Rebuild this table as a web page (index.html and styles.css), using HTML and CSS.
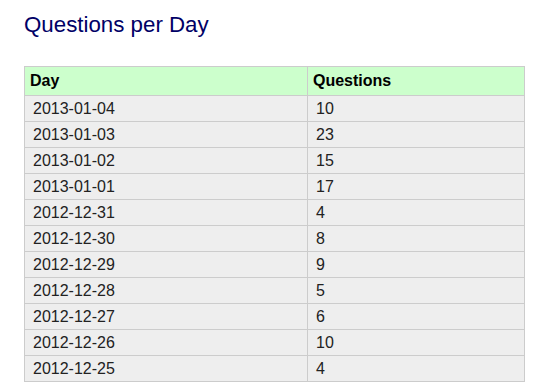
FILE: index.html
```html
<!DOCTYPE html>
<html>
<head>
<meta charset="utf-8">
<title>Questions per Day</title>
<link rel="stylesheet" href="styles.css">
</head>
<body>
<div class="page">
  <h1 class="title">Questions per Day</h1>
  <table class="stats">
    <colgroup><col class="col-day"><col class="col-q"></colgroup>
    <thead>
      <tr><th>Day</th><th>Questions</th></tr>
    </thead>
    <tbody>
      <tr><td>2013-01-04</td><td>10</td></tr>
      <tr><td>2013-01-03</td><td>23</td></tr>
      <tr><td>2013-01-02</td><td>15</td></tr>
      <tr><td>2013-01-01</td><td>17</td></tr>
      <tr><td>2012-12-31</td><td>4</td></tr>
      <tr><td>2012-12-30</td><td>8</td></tr>
      <tr><td>2012-12-29</td><td>9</td></tr>
      <tr><td>2012-12-28</td><td>5</td></tr>
      <tr><td>2012-12-27</td><td>6</td></tr>
      <tr><td>2012-12-26</td><td>10</td></tr>
      <tr><td>2012-12-25</td><td>4</td></tr>
    </tbody>
  </table>
</div>
</body>
</html>
```
FILE: styles.css
```css
html, body {
  margin: 0;
  padding: 0;
  background: #ffffff;
}
body {
  font-family: "Liberation Sans", Arial, sans-serif;
  color: #222222;
}
.page {
  padding: 12px 15px 0 24px;
}
.title {
  margin: 0 0 29px;
  font-size: 22.3px;
  line-height: 25px;
  font-weight: normal;
  color: #000066;
}
.stats {
  border-collapse: collapse;
  table-layout: fixed;
  width: 500px;
  font-size: 16px;
}
.col-day { width: 283px; }
.col-q { width: 217px; }
.stats th,
.stats td {
  border: 1px solid #cccccc;
  text-align: left;
}
.stats th {
  background: #ccffcc;
  color: #000000;
  font-weight: bold;
  line-height: 18px;
  padding: 5px 4px 5px 5px;
}
.stats td {
  background: #eeeeee;
  line-height: 19px;
  padding: 3px 8px;
}
```
